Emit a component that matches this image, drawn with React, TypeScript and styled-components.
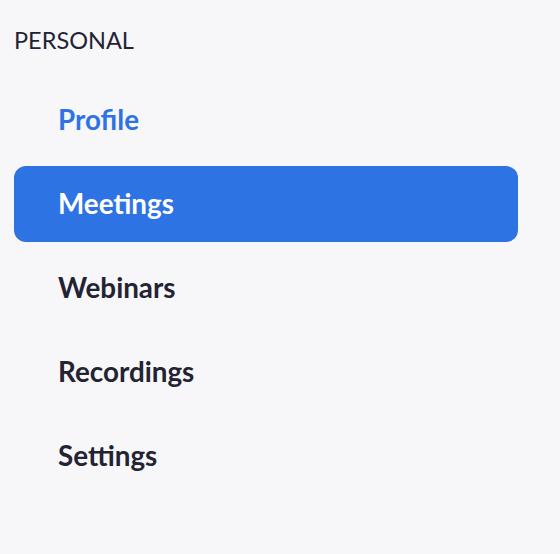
import { createGlobalStyle, styled } from 'styled-components';

const GlobalStyle = createGlobalStyle`
    html, body {
        margin: 0;
        padding: 0;
        background: #f7f7f9;
    }
    body {
        font-family: Lato, "Liberation Sans", sans-serif;
    }
`;

const items = ['Profile', 'Meetings', 'Webinars', 'Recordings', 'Settings'];

const App = () => {
    const active = 'Meetings';
    const highlighted = 'Profile';

    return (
        <>
            <GlobalStyle />
            <Sidebar>
                <SectionTitle>PERSONAL</SectionTitle>
                <NavList>
                    {items.map((item) => (
                        <NavItem
                            key={item}
                            $active={item === active}
                            $highlighted={item === highlighted}
                        >
                            {item}
                        </NavItem>
                    ))}
                </NavList>
            </Sidebar>
        </>
    );
};

export default App;


const Sidebar = styled.nav`
    width: 560px;
    height: 554px;
    box-sizing: border-box;
    padding: 26px 42px 0 14px;
    background: #f7f7f9;
    display: flex;
    flex-direction: column;
`;

const SectionTitle = styled.div`
    height: 28px;
    line-height: 28px;
    font-size: 23.5px;
    font-weight: 400;
    color: #232333;
`;

const NavList = styled.ul`
    list-style: none;
    margin: 28px 0 0;
    padding: 0;
    display: flex;
    flex-direction: column;
    gap: 8px;
`;

const NavItem = styled.li<{ $active: boolean; $highlighted: boolean }>`
    height: 76px;
    box-sizing: border-box;
    display: flex;
    align-items: center;
    padding: 0 0 2px 44px;
    border-radius: 12px;
    font-size: 27.8px;
    font-weight: 700;
    cursor: pointer;
    color: ${({ $active, $highlighted }) =>
        $active ? '#ffffff' : $highlighted ? '#2e73e3' : '#232333'};
    background: ${({ $active }) => ($active ? '#2e73e3' : 'transparent')};
`;
